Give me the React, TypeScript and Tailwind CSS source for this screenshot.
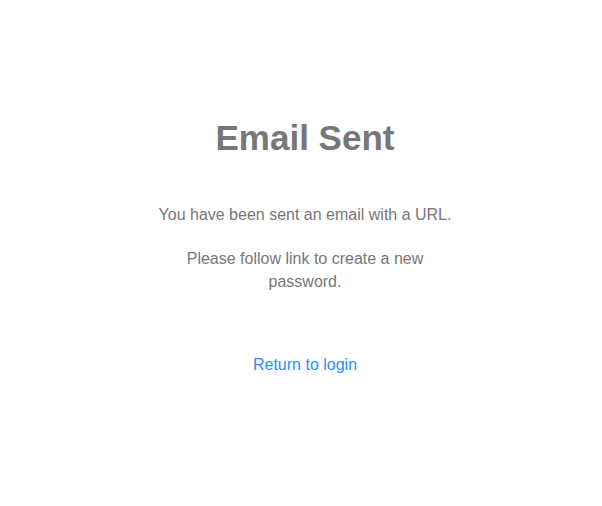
import React from "react";

export default function App() {
  return (
    <div
      className="w-full h-[506px] bg-white pl-2 flex flex-col items-center"
      style={{ fontFamily: '"Liberation Sans", Arial, Helvetica, sans-serif' }}
    >
      <h1 className="mt-[117px] text-[35px] leading-[41px] font-bold text-[#777777] text-center">
        Email Sent
      </h1>
      <p className="mt-[45px] w-[300px] text-[16px] leading-[23px] text-[#777777] text-center">
        You have been sent an email with a URL.
      </p>
      <p className="mt-[21px] w-[300px] text-[16px] leading-[23px] text-[#777777] text-center">
        Please follow link to create a new password.
      </p>
      <a
        href="#"
        className="mt-[60px] text-[16px] leading-[23px] text-[#2b8cff] text-center"
      >
        Return to login
      </a>
    </div>
  );
}
